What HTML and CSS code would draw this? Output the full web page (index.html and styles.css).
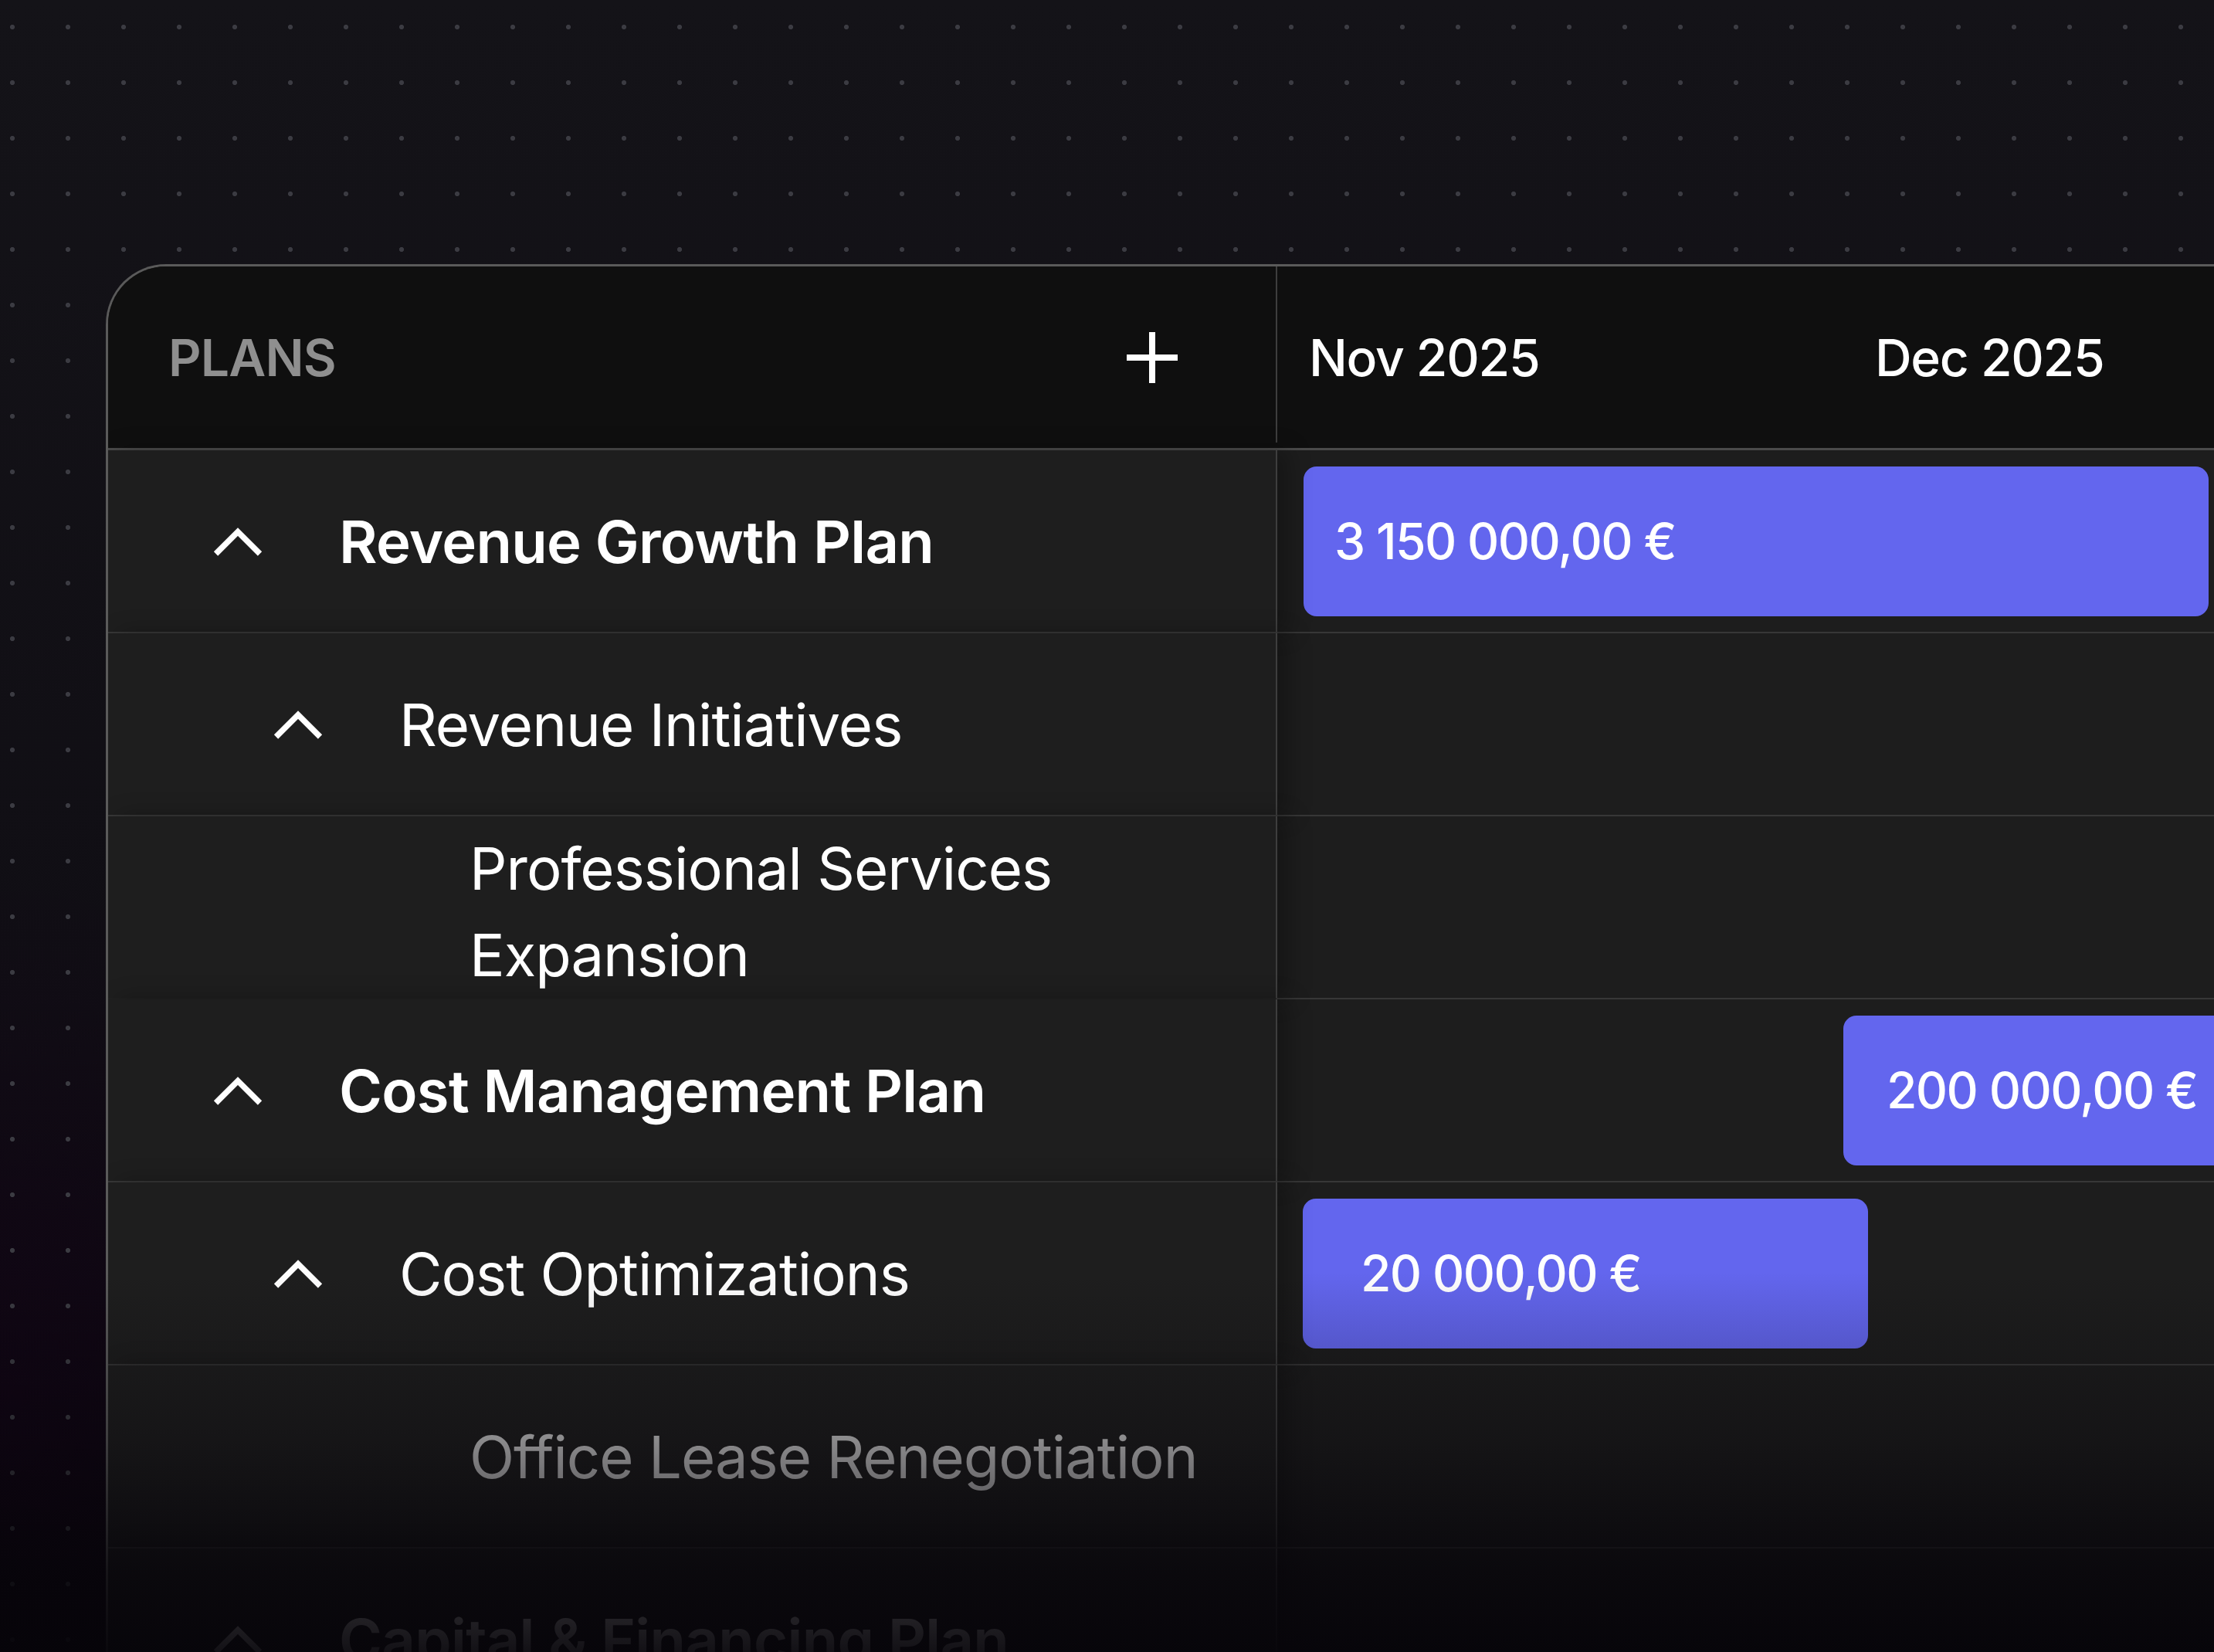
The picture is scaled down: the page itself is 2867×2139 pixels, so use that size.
FILE: index.html
```html
<!DOCTYPE html>
<html lang="en">
<head>
<meta charset="utf-8">
<title>Plans timeline</title>
<link rel="stylesheet" href="styles.css">
</head>
<body>
<div class="page">
  <div class="card">
    <div class="head">
      <div class="plans-head">
        <span class="plans-title">PLANS</span>
        <svg class="plus" viewBox="0 0 66 66" width="66" height="66" aria-hidden="true">
          <path d="M33 0V66M0 33H66" stroke="#fff" stroke-width="8" fill="none"/>
        </svg>
      </div>
      <div class="time-head">
        <span class="month">Nov 2025</span>
        <span class="month">Dec 2025</span>
      </div>
    </div>

    <div class="row">
      <div class="plan l1">
        <span class="chev"><svg viewBox="0 0 66 41" width="66" height="41" aria-hidden="true"><polyline points="4.5,37 33,8.5 61.5,37" fill="none" stroke="#fff" stroke-width="7.5"/></svg></span>
        <span class="name strong">Revenue Growth Plan</span>
      </div>
      <div class="time"><div class="bar pad-s" style="margin-left:34px;width:1172px">3 150 000,00 €</div></div>
    </div>

    <div class="row">
      <div class="plan l2">
        <span class="chev"><svg viewBox="0 0 66 41" width="66" height="41" aria-hidden="true"><polyline points="4.5,37 33,8.5 61.5,37" fill="none" stroke="#fff" stroke-width="7.5"/></svg></span>
        <span class="name">Revenue Initiatives</span>
      </div>
      <div class="time"></div>
    </div>

    <div class="row">
      <div class="plan l3 no-line two">
        <span class="name">Professional Services Expansion</span>
      </div>
      <div class="time"></div>
    </div>

    <div class="row">
      <div class="plan l1">
        <span class="chev"><svg viewBox="0 0 66 41" width="66" height="41" aria-hidden="true"><polyline points="4.5,37 33,8.5 61.5,37" fill="none" stroke="#fff" stroke-width="7.5"/></svg></span>
        <span class="name strong">Cost Management Plan</span>
      </div>
      <div class="time"><div class="bar pad-m" style="margin-left:733px;width:600px">200 000,00 €</div></div>
    </div>

    <div class="row">
      <div class="plan l2">
        <span class="chev"><svg viewBox="0 0 66 41" width="66" height="41" aria-hidden="true"><polyline points="4.5,37 33,8.5 61.5,37" fill="none" stroke="#fff" stroke-width="7.5"/></svg></span>
        <span class="name">Cost Optimizations</span>
      </div>
      <div class="time"><div class="bar pad-l" style="margin-left:33px;width:732px">20 000,00 €</div></div>
    </div>

    <div class="row">
      <div class="plan l3">
        <span class="name muted">Office Lease Renegotiation</span>
      </div>
      <div class="time"></div>
    </div>

    <div class="row">
      <div class="plan l1">
        <span class="chev"><svg viewBox="0 0 66 41" width="66" height="41" aria-hidden="true"><polyline points="4.5,37 33,8.5 61.5,37" fill="none" stroke="#fff" stroke-width="7.5"/></svg></span>
        <span class="name strong">Capital &amp; Financing Plan</span>
      </div>
      <div class="time"></div>
    </div>
  </div>
  <div class="fade"></div>
</div>
</body>
</html>
```

FILE: styles.css
```css
* { box-sizing: border-box; }

html, body {
  margin: 0;
  padding: 0;
  width: 2867px;
  height: 2139px;
  overflow: hidden;
  background: #121116;
  font-family: "Inter", "Noto Sans", sans-serif;
  color: #fff;
}

.page {
  position: relative;
  width: 2867px;
  height: 2139px;
  overflow: hidden;
  padding: 342px 0 0 137px;
  background-color: #121116;
  background-image:
    radial-gradient(circle, #3b3b42 2.7px, transparent 3.5px),
    radial-gradient(ellipse 800px 1000px at 0% 85%, rgba(18, 3, 22, 0.7), transparent 70%),
    linear-gradient(to bottom, #141318 0%, #100e14 60%, #0a070c 100%);
  background-size: 72px 72px, 100% 100%, 100% 100%;
  background-position: -20px -1px, 0 0, 0 0;
}

.card {
  width: 2800px;
  border-top: 3px solid #5a5a5a;
  border-left: 3px solid #5a5a5a;
  border-top-left-radius: 78px;
  background: #1e1e1e;
  overflow: hidden;
}

/* header */
.head {
  display: flex;
  height: 238px;
  padding-bottom: 7px;
  background: #0f0f0f;
  border-bottom: 3px solid #4a4a4a;
}

.plans-head {
  width: 1514px;
  flex: none;
  display: flex;
  align-items: center;
  justify-content: space-between;
  padding: 7px 127px 0 78px;
  border-right: 2px solid #3e3e3e;
}

.plans-title {
  font-size: 66px;
  font-weight: 600;
  color: #8f8f8f;
  letter-spacing: -0.8px;
}

.plus { display: block; }

.time-head {
  flex: 1;
  display: flex;
  align-items: center;
  padding: 7px 0 0 41px;
}

.month {
  width: 733px;
  flex: none;
  font-size: 66px;
  font-weight: 500;
  color: #fff;
  letter-spacing: -1.3px;
}

/* rows */
.row {
  display: flex;
  height: 237px;
}

.plan {
  width: 1514px;
  flex: none;
  display: flex;
  align-items: center;
  padding-right: 90px;
  border-right: 2px solid #3e3e3e;
  border-bottom: 2px solid #373737;
  background: #1e1e1e;
  box-shadow: 14px 0 28px rgba(0, 0, 0, 0.28);
  position: relative;
  z-index: 1;
}

.plan.no-line { border-bottom-color: #202020; }
.plan.two { padding-top: 10px; }

.plan.l1 { padding-left: 135px; }
.plan.l2 { padding-left: 213px; }
.plan.l3 { padding-left: 468px; }

.chev {
  width: 164px;
  flex: none;
  display: flex;
  align-items: center;
}
.chev svg { display: block; }

.name {
  font-size: 76px;
  font-weight: 400;
  line-height: 112px;
  color: #fff;
  letter-spacing: -1px;
}

.name.strong {
  font-weight: 600;
  letter-spacing: -0.7px;
}

.name.muted {
  color: #cfcfcf;
}

.time {
  flex: 1;
  display: flex;
  align-items: center;
  border-bottom: 2px solid #373737;
  background: #1d1d1d;
}

.bar {
  flex: none;
  height: 194px;
  display: flex;
  align-items: center;
  background: #6366ee;
  border-radius: 17px;
  font-size: 64px;
  font-weight: 500;
  color: #fff;
  letter-spacing: -1.6px;
  white-space: nowrap;
}

.bar.pad-s { padding-left: 40px; }
.bar.pad-m { padding-left: 56px; }
.bar.pad-l { padding-left: 75px; }

/* bottom fade */
.fade {
  position: absolute;
  z-index: 5;
  left: 0;
  top: 0;
  width: 100%;
  height: 100%;
  pointer-events: none;
  background: linear-gradient(to bottom,
    rgba(6, 4, 9, 0) 0%,
    rgba(6, 4, 9, 0) 77%,
    rgba(6, 4, 9, 0.33) 87%,
    rgba(6, 4, 9, 0.8) 95%,
    rgba(6, 4, 9, 0.95) 100%);
}
```
